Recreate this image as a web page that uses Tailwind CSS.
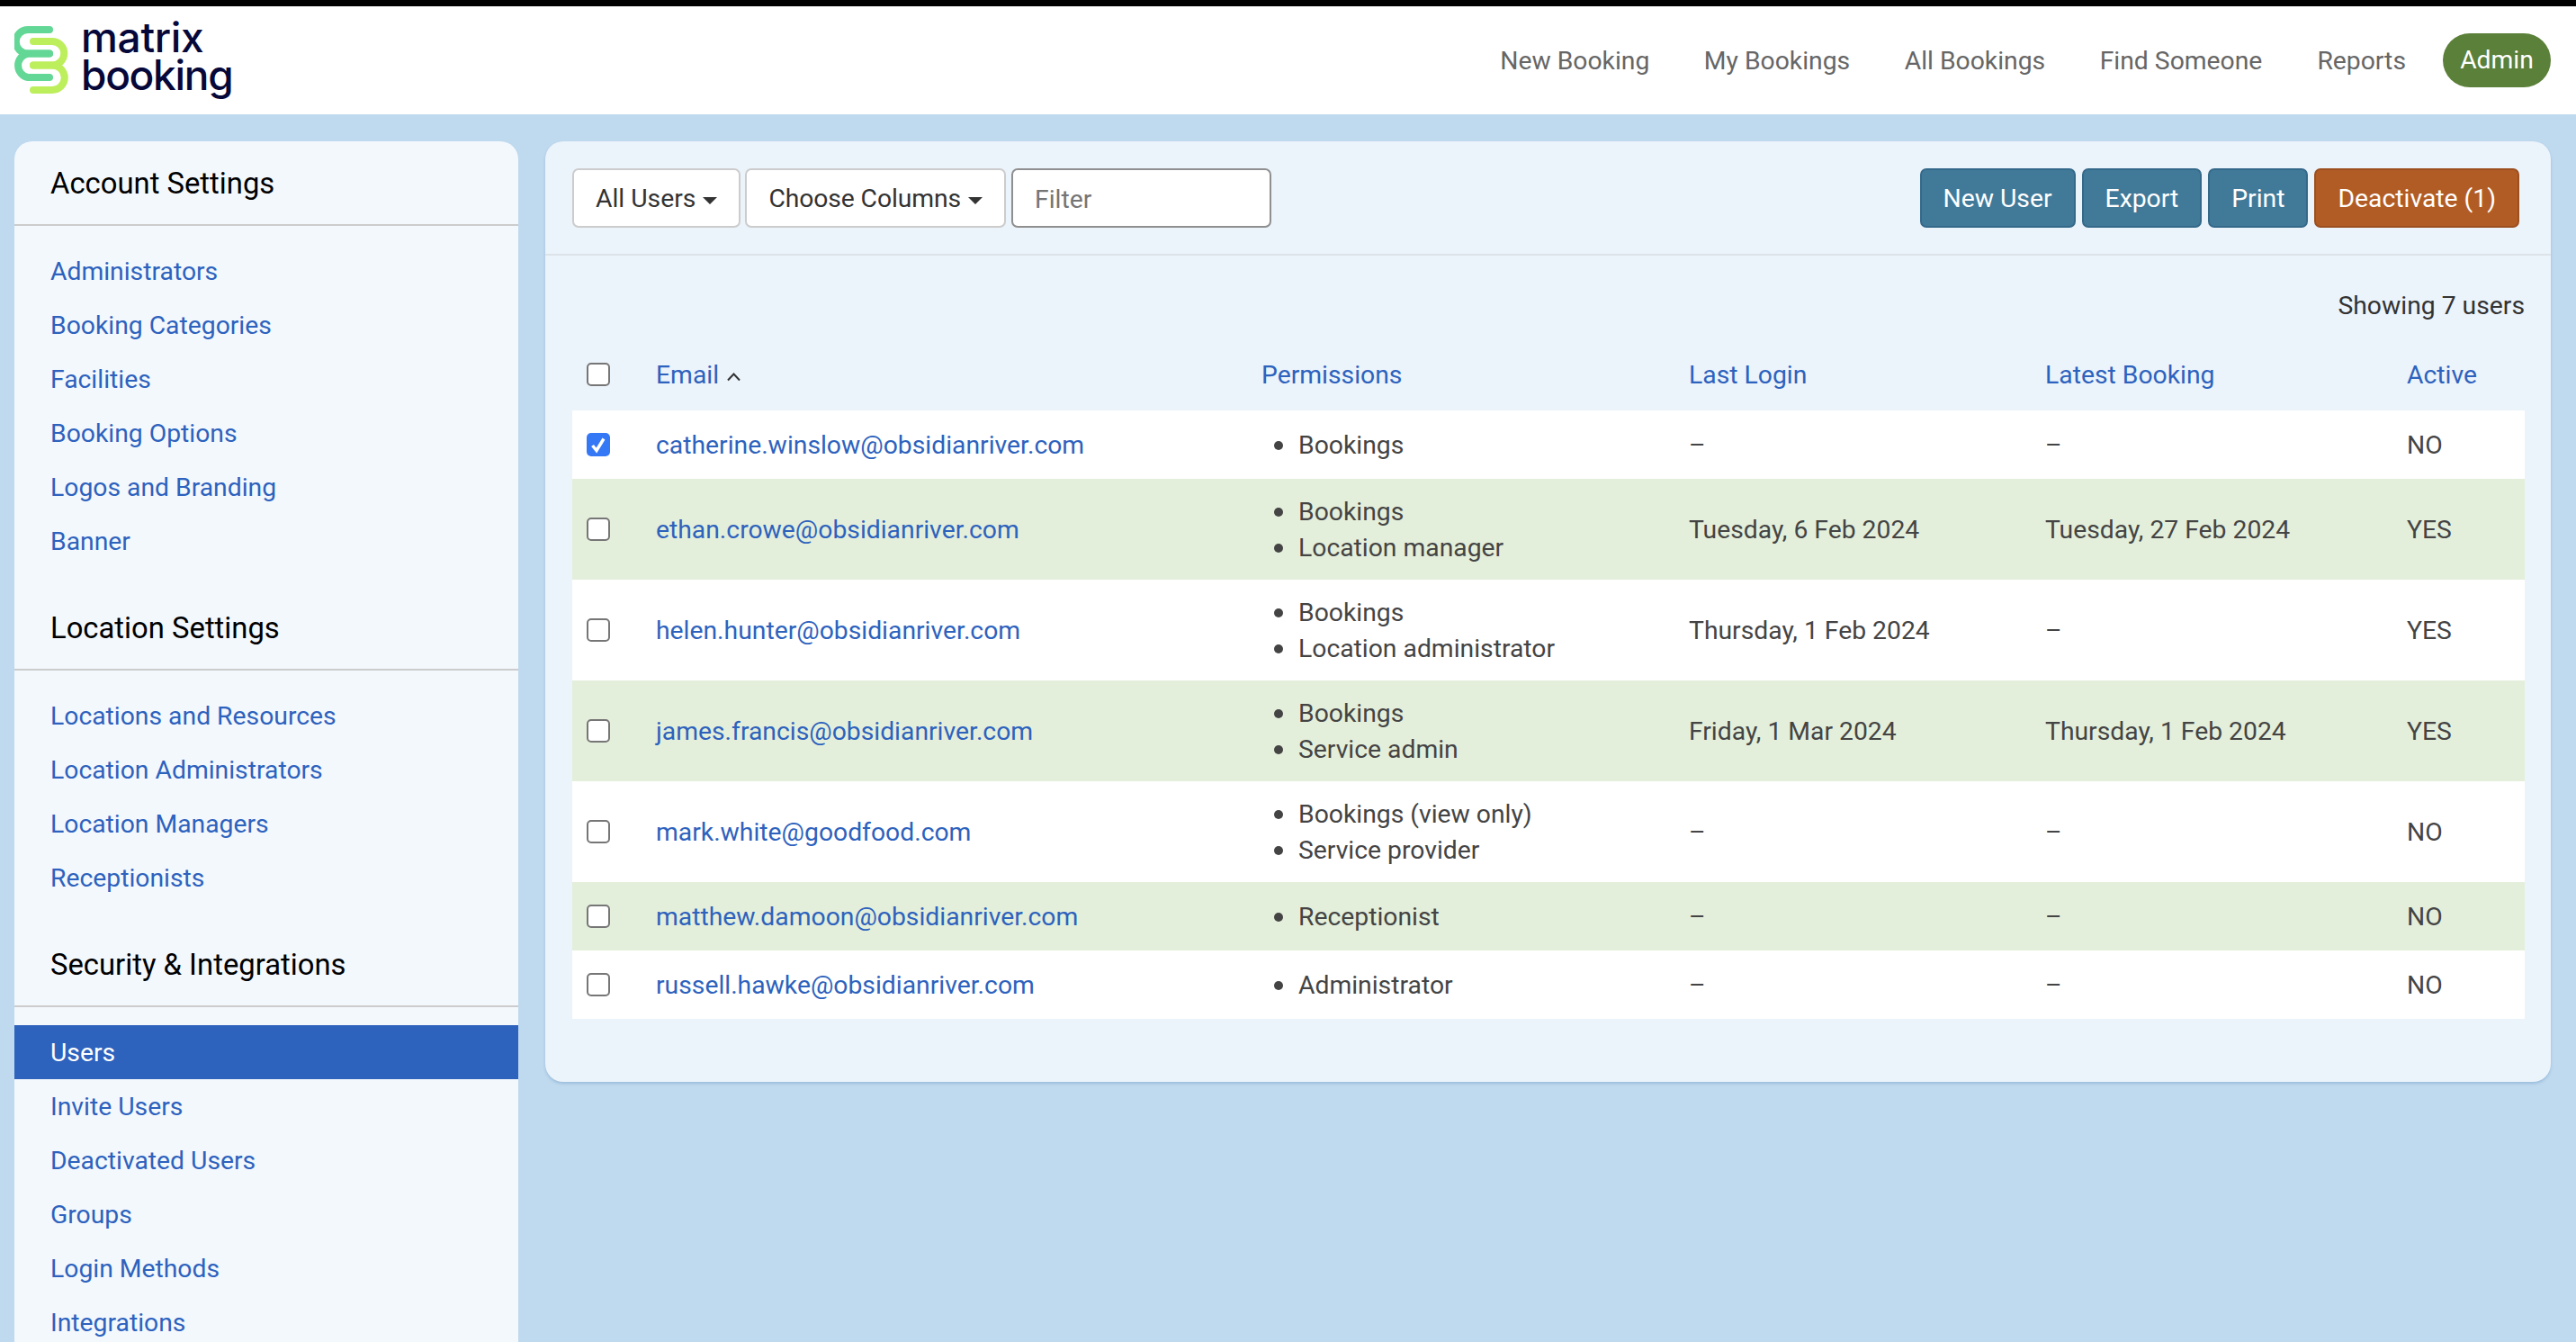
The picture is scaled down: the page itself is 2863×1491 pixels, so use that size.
<!DOCTYPE html>
<html lang="en">
<head>
<meta charset="utf-8">
<title>Users</title>
<script src="https://cdn.jsdelivr.net/npm/@tailwindcss/browser@4"></script>
</head>
<body class="font-['Roboto',sans-serif] text-[28.3px] text-[#444] bg-[#bfd9ee] overflow-hidden">
<div class="h-[1491px] flex flex-col overflow-hidden">
  <header class="h-[127px] shrink-0 border-t-[7px] border-black bg-white flex items-center justify-between pr-[28px] pl-[16px]">
    <div class="flex items-center">
      <svg width="60" height="80" viewBox="16 27 60 80" class="block" fill="none" stroke-width="8" stroke-linecap="round">
        <path d="M37 46H58A13 13 0 0 1 58 72.5H37" stroke="#bdee5c"/>
        <path d="M37 72.5H58A13.5 13.5 0 0 1 58 100H37" stroke="#bdee5c"/>
        <path d="M55 33H31A13 13 0 0 0 31 59.5H55" stroke="#63d795"/>
        <path d="M55 59.5H31A13.5 13.5 0 0 0 31 86H55" stroke="#63d795"/>
      </svg>
      <div class="ml-[14px] font-['Inter',sans-serif] font-medium text-[46px] leading-[42px] text-[#07083a] -mt-[11px]">
        <span class="block tracking-[-0.3px]">matrix</span>
        <span class="block tracking-[-1.3px]">booking</span>
      </div>
    </div>
    <nav class="flex items-center text-[#666]">
      <a class="mr-[60.5px] pt-[2px]">New Booking</a>
      <a class="mr-[60.5px] pt-[2px]">My Bookings</a>
      <a class="mr-[60.5px] pt-[2px]">All Bookings</a>
      <a class="mr-[61px] pt-[2px]">Find Someone</a>
      <a class="mr-[41px] pt-[2px]">Reports</a>
      <a class="h-[60px] w-[120px] rounded-full bg-[#5b8039] text-white flex items-center justify-center">Admin</a>
    </nav>
  </header>
  <main class="flex items-start gap-[30px] pl-[16px] pr-[28px] pt-[30px]">
    <aside class="w-[560px] shrink-0 bg-[#f3f8fd] rounded-t-[20px]">
      <h2 class="h-[92px] pl-[40px] pt-[26px] text-[32.8px] leading-[42px] text-black">Account Settings</h2>
      <div class="h-[2px] bg-[#cccccc]"></div>
      <ul class="pt-[20px] text-[#2d62bd]">
        <li class="h-[60px] pl-[40px] pt-[3px] flex items-center">Administrators</li>
        <li class="h-[60px] pl-[40px] pt-[3px] flex items-center">Booking Categories</li>
        <li class="h-[60px] pl-[40px] pt-[3px] flex items-center">Facilities</li>
        <li class="h-[60px] pl-[40px] pt-[3px] flex items-center">Booking Options</li>
        <li class="h-[60px] pl-[40px] pt-[3px] flex items-center">Logos and Branding</li>
        <li class="h-[60px] pl-[40px] pt-[3px] flex items-center">Banner</li>
      </ul>
      <h2 class="h-[112px] pl-[40px] pt-[46px] text-[32.8px] leading-[42px] text-black">Location Settings</h2>
      <div class="h-[2px] bg-[#cccccc]"></div>
      <ul class="pt-[20px] text-[#2d62bd]">
        <li class="h-[60px] pl-[40px] pt-[3px] flex items-center">Locations and Resources</li>
        <li class="h-[60px] pl-[40px] pt-[3px] flex items-center">Location Administrators</li>
        <li class="h-[60px] pl-[40px] pt-[3px] flex items-center">Location Managers</li>
        <li class="h-[60px] pl-[40px] pt-[3px] flex items-center">Receptionists</li>
      </ul>
      <h2 class="h-[112px] pl-[40px] pt-[46px] text-[32.8px] leading-[42px] text-black">Security &amp; Integrations</h2>
      <div class="h-[2px] bg-[#cccccc]"></div>
      <ul class="pt-[20px] text-[#2d62bd]">
        <li class="h-[60px] pl-[40px] pt-[3px] flex items-center bg-[#2d62bd] text-white">Users</li>
        <li class="h-[60px] pl-[40px] pt-[3px] flex items-center">Invite Users</li>
        <li class="h-[60px] pl-[40px] pt-[3px] flex items-center">Deactivated Users</li>
        <li class="h-[60px] pl-[40px] pt-[3px] flex items-center">Groups</li>
        <li class="h-[60px] pl-[40px] pt-[3px] flex items-center">Login Methods</li>
        <li class="h-[60px] pl-[40px] pt-[3px] flex items-center">Integrations</li>
      </ul>
    </aside>
    <section class="flex-1 min-w-0 bg-[#ebf3fb] rounded-[20px] shadow-[0_2px_3px_rgba(90,140,190,0.35)] h-[1045px]">
      <div class="h-[127px] border-b-2 border-[#dde3e8] pl-[30px] pr-[35px] pt-[30px] flex justify-between items-start">
        <div class="flex">
          <button class="h-[66px] px-[24px] pt-[2px] bg-white border-2 border-[#ccc] rounded-[7px] text-[#333] flex items-center">All Users<span class="ml-[8px] mt-[3px] border-x-[8px] border-x-transparent border-t-[8px] border-t-[#333]"></span></button>
          <button class="ml-[5px] h-[66px] px-[24px] pt-[2px] bg-white border-2 border-[#ccc] rounded-[7px] text-[#333] tracking-[-0.1px] flex items-center">Choose Columns<span class="ml-[8px] mt-[3px] border-x-[8px] border-x-transparent border-t-[8px] border-t-[#333]"></span></button>
          <input class="ml-[6px] h-[66px] w-[289px] pl-[24px] pr-[10px] pt-[2px] bg-white border-2 border-[#8f8f8f] rounded-[7px] placeholder:text-[#757575] outline-none" placeholder="Filter">
        </div>
        <div class="flex gap-[7px] text-white">
          <button class="h-[66px] px-[24px] pt-[2px] bg-[#417a99] border-2 border-[#35698a] rounded-[7px]">New User</button>
          <button class="h-[66px] px-[24px] pt-[2px] bg-[#417a99] border-2 border-[#35698a] rounded-[7px]">Export</button>
          <button class="h-[66px] px-[24px] pt-[2px] bg-[#417a99] border-2 border-[#35698a] rounded-[7px]">Print</button>
          <button class="h-[66px] px-[24px] pt-[2px] bg-[#b25c25] border-2 border-[#9c4f1f] rounded-[7px]">Deactivate (1)</button>
        </div>
      </div>
      <div class="pl-[30px] pr-[29px]">
        <div class="h-[92px] pt-[38px] text-right leading-[36px] text-[#333]">Showing 7 users</div>
        <table class="w-full table-fixed border-collapse">
          <colgroup>
            <col class="w-[77px]"><col class="w-[673px]"><col class="w-[475px]"><col class="w-[396px]"><col class="w-[402px]"><col>
          </colgroup>
          <thead class="text-[#2d62bd]">
            <tr class="h-[80px] text-left">
              <th class="pl-[16px] font-normal align-middle"><span class="block w-[26px] h-[26px] border-2 border-[#767676] rounded-[5px] bg-white"></span></th>
              <th class="pl-[16px] pt-[2px] font-normal"><span class="inline-flex items-center">Email<svg class="ml-[8px] mt-[2px]" width="17" height="11" viewBox="0 0 17 11" fill="none" stroke="#333" stroke-width="2"><path d="M2 9.5 8.5 2.5 15 9.5"/></svg></span></th>
              <th class="pl-[16px] pt-[2px] font-normal">Permissions</th>
              <th class="pl-[16px] pt-[2px] font-normal">Last Login</th>
              <th class="pl-[16px] pt-[2px] font-normal">Latest Booking</th>
              <th class="pl-[16px] pt-[2px] font-normal">Active</th>
            </tr>
          </thead>
          <tbody class="[&_td:not(:first-child)]:pt-[2px] [&_li]:flex [&_li]:items-center [&_li]:leading-[40px] [&_li]:before:content-[''] [&_li]:before:w-[10px] [&_li]:before:h-[10px] [&_li]:before:mr-[17px] [&_li]:before:rounded-full [&_li]:before:bg-[#444]">
            <tr class="h-[76px] bg-white">
              <td class="pl-[16px]"><span class="relative block w-[26px] h-[26px] rounded-[5px] bg-[#3478f6]"><svg class="absolute inset-0" width="26" height="26" viewBox="0 0 26 26" fill="none" stroke="#fff" stroke-width="3.5"><path d="M6.5 14 11 19.5 19 6.5"/></svg></span></td>
              <td class="pl-[16px] text-[#2d62bd]">catherine.winslow@obsidianriver.com</td>
              <td class="pl-[30px]"><ul><li>Bookings</li></ul></td>
              <td class="pl-[16px]">–</td><td class="pl-[16px]">–</td><td class="pl-[16px]">NO</td>
            </tr>
            <tr class="h-[112px] bg-[#e4efdb]">
              <td class="pl-[16px]"><span class="block w-[26px] h-[26px] border-2 border-[#767676] rounded-[5px] bg-white"></span></td>
              <td class="pl-[16px] text-[#2d62bd]">ethan.crowe@obsidianriver.com</td>
              <td class="pl-[30px]"><ul><li>Bookings</li><li>Location manager</li></ul></td>
              <td class="pl-[16px]">Tuesday, 6 Feb 2024</td><td class="pl-[16px]">Tuesday, 27 Feb 2024</td><td class="pl-[16px]">YES</td>
            </tr>
            <tr class="h-[112px] bg-white">
              <td class="pl-[16px]"><span class="block w-[26px] h-[26px] border-2 border-[#767676] rounded-[5px] bg-white"></span></td>
              <td class="pl-[16px] text-[#2d62bd]">helen.hunter@obsidianriver.com</td>
              <td class="pl-[30px]"><ul><li>Bookings</li><li>Location administrator</li></ul></td>
              <td class="pl-[16px]">Thursday, 1 Feb 2024</td><td class="pl-[16px]">–</td><td class="pl-[16px]">YES</td>
            </tr>
            <tr class="h-[112px] bg-[#e4efdb]">
              <td class="pl-[16px]"><span class="block w-[26px] h-[26px] border-2 border-[#767676] rounded-[5px] bg-white"></span></td>
              <td class="pl-[16px] text-[#2d62bd]">james.francis@obsidianriver.com</td>
              <td class="pl-[30px]"><ul><li>Bookings</li><li>Service admin</li></ul></td>
              <td class="pl-[16px]">Friday, 1 Mar 2024</td><td class="pl-[16px]">Thursday, 1 Feb 2024</td><td class="pl-[16px]">YES</td>
            </tr>
            <tr class="h-[112px] bg-white">
              <td class="pl-[16px]"><span class="block w-[26px] h-[26px] border-2 border-[#767676] rounded-[5px] bg-white"></span></td>
              <td class="pl-[16px] text-[#2d62bd]">mark.white@goodfood.com</td>
              <td class="pl-[30px]"><ul><li>Bookings (view only)</li><li>Service provider</li></ul></td>
              <td class="pl-[16px]">–</td><td class="pl-[16px]">–</td><td class="pl-[16px]">NO</td>
            </tr>
            <tr class="h-[76px] bg-[#e4efdb]">
              <td class="pl-[16px]"><span class="block w-[26px] h-[26px] border-2 border-[#767676] rounded-[5px] bg-white"></span></td>
              <td class="pl-[16px] text-[#2d62bd]">matthew.damoon@obsidianriver.com</td>
              <td class="pl-[30px]"><ul><li>Receptionist</li></ul></td>
              <td class="pl-[16px]">–</td><td class="pl-[16px]">–</td><td class="pl-[16px]">NO</td>
            </tr>
            <tr class="h-[76px] bg-white">
              <td class="pl-[16px]"><span class="block w-[26px] h-[26px] border-2 border-[#767676] rounded-[5px] bg-white"></span></td>
              <td class="pl-[16px] text-[#2d62bd]">russell.hawke@obsidianriver.com</td>
              <td class="pl-[30px]"><ul><li>Administrator</li></ul></td>
              <td class="pl-[16px]">–</td><td class="pl-[16px]">–</td><td class="pl-[16px]">NO</td>
            </tr>
          </tbody>
        </table>
      </div>
    </section>
  </main>
</div>
</body>
</html>
